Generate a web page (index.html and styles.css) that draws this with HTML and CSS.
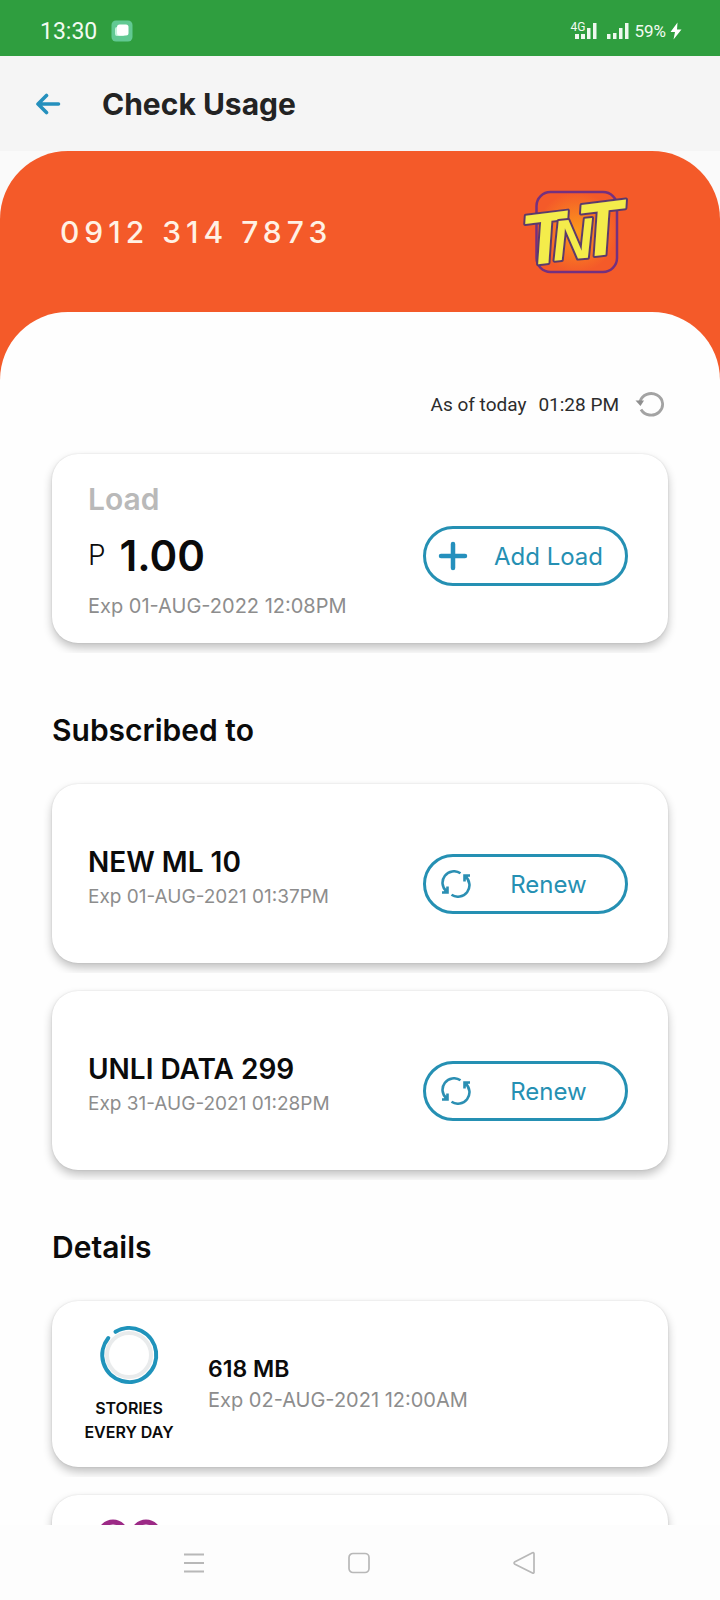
FILE: index.html
```
<!DOCTYPE html>
<html lang="en">
<head>
<meta charset="utf-8">
<meta name="viewport" content="width=device-width, initial-scale=1">
<title>Check Usage</title>
<link rel="stylesheet" href="styles.css">
</head>
<body>
<div class="status">
  <span class="clock">13:30</span>
  <svg class="app-badge" width="22" height="22" viewBox="0 0 22 22" aria-hidden="true">
    <rect x="0.5" y="0.5" width="21" height="21" rx="4.500" fill="#62c993"/>
    <rect x="4" y="7" width="10" height="9" rx="2" fill="#c4f3dc"/>
    <rect x="6" y="4.500" width="11.500" height="11" rx="2.500" fill="#fff"/>
  </svg>
  <span class="status-right">
    <span class="cell">
      <svg width="28" height="18" viewBox="0 0 28 18" fill="#eef8ee" aria-hidden="true">
        <rect x="5" y="12" width="4" height="5"/><rect x="11" y="12" width="4" height="5"/><rect x="17" y="6" width="3.500" height="11"/><rect x="23" y="1" width="3.500" height="16"/>
      </svg>
      <span class="net">4G</span>
    </span>
    <svg width="24" height="18" viewBox="0 0 24 18" fill="#eef8ee" aria-hidden="true">
      <rect x="1" y="12" width="3.500" height="5"/><rect x="7" y="11" width="3.500" height="6"/><rect x="13" y="6" width="3.500" height="11"/><rect x="19" y="1" width="3.500" height="16"/>
    </svg>
    <span class="battery">59%</span>
    <svg class="bolt" width="12" height="18" viewBox="0 0 12 18" aria-hidden="true"><path d="M7.500 0.500 0.500 10h4.500L3.500 17.500 11.500 7.500H7z" fill="#fff"/></svg>
  </span>
</div>

<header class="topbar">
  <button class="back" type="button" aria-label="Back">
    <svg width="26" height="24" viewBox="0 0 26 24" fill="none" stroke="#2590bd" stroke-width="3.600" stroke-linecap="round" stroke-linejoin="round"><path d="M22.500 12H3M10.500 3.500 2 12l8.500 8.500"/></svg>
  </button>
  <h1 class="title">Check Usage</h1>
</header>

<main class="main">
  <div class="hero">
    <div class="account">
      <span class="number">0912 314 7873</span>
      <svg class="logo" width="140" height="105" viewBox="0 0 140 105" role="img" aria-label="TNT">
        <defs><radialGradient id="glow"><stop offset="0" stop-color="#fb9a1c"/><stop offset="1" stop-color="#f45a29"/></radialGradient></defs>
        <rect x="26.500" y="13" width="80.500" height="80" rx="14" fill="url(#glow)" stroke="#74307f" stroke-width="2.500"/>
        <g class="logo-text">
          <text x="0" y="0" font-size="72" transform="translate(37 84) rotate(-7)" text-anchor="middle">T</text>
          <text x="0" y="0" font-size="57" transform="translate(64 80) rotate(-5)" text-anchor="middle">N</text>
          <text x="0" y="0" font-size="76" transform="translate(94 76) rotate(-7)" text-anchor="middle">T</text>
        </g>
      </svg>
    </div>

    <div class="panel">
      <div class="asof">
        <span>As of today</span>
        <span>01:28 PM</span>
        <button class="refresh" type="button" aria-label="Refresh">
          <svg width="30" height="26" viewBox="0 0 30 26" fill="none"><path d="M5 10.500A11.500 10.800 0 1 1 6 18.500" stroke="#a3a3a3" stroke-width="2.800"/><path d="M0.500 9.500 9 9.500 5.500 15z" fill="#8e8e8e"/></svg>
        </button>
      </div>

      <div class="slot slot-load">
        <section class="card card-load">
          <div>
            <h2 class="load-label">Load</h2>
            <p class="balance"><span class="peso">P</span><strong class="amount">1.00</strong></p>
            <p class="exp">Exp 01-AUG-2022 12:08PM</p>
          </div>
          <button class="pill pill-add" type="button">
            <svg width="30" height="30" viewBox="0 0 30 30" stroke="#2590bd" stroke-width="4.500" stroke-linecap="round" aria-hidden="true"><path d="M15 3v24M3 15h24"/></svg>
            <span class="pill-text">Add Load</span>
          </button>
        </section>
      </div>

      <h2 class="heading">Subscribed to</h2>
      <ul class="list">
        <li class="slot">
          <article class="card card-sub">
            <div>
              <h3 class="name">NEW ML 10</h3>
              <p class="exp exp-sub">Exp 01-AUG-2021 01:37PM</p>
            </div>
            <button class="pill" type="button">
              <svg width="30" height="28" viewBox="0 0 30 28" fill="none" stroke="#2b8fb3" stroke-width="2.600" aria-hidden="true"><path d="M5.500 21.500A11.500 11.500 0 0 1 19.500 3.300M24.500 6.500A11.500 11.500 0 0 1 10.500 24.700"/><path d="M29 5.500h-5.500v6M1 22.500h5.500v-6"/><path d="M23 5.500h5l-4.500 5zM7 22.500H2l4.500-5z" fill="#2b8fb3" stroke="none"/></svg>
              <span class="pill-text">Renew</span>
            </button>
          </article>
        </li>
        <li class="slot">
          <article class="card card-sub">
            <div>
              <h3 class="name">UNLI DATA 299</h3>
              <p class="exp exp-sub">Exp 31-AUG-2021 01:28PM</p>
            </div>
            <button class="pill" type="button">
              <svg width="30" height="28" viewBox="0 0 30 28" fill="none" stroke="#2b8fb3" stroke-width="2.600" aria-hidden="true"><path d="M5.500 21.500A11.500 11.500 0 0 1 19.500 3.300M24.500 6.500A11.500 11.500 0 0 1 10.500 24.700"/><path d="M29 5.500h-5.500v6M1 22.500h5.500v-6"/><path d="M23 5.500h5l-4.500 5zM7 22.500H2l4.500-5z" fill="#2b8fb3" stroke="none"/></svg>
              <span class="pill-text">Renew</span>
            </button>
          </article>
        </li>
      </ul>

      <h2 class="heading heading-details">Details</h2>
      <ul class="list">
        <li class="slot">
          <article class="card card-detail">
            <div class="meter">
              <svg width="60" height="60" viewBox="0 0 60 60" fill="none" aria-hidden="true"><circle cx="30" cy="30" r="22" stroke="#e9ebec" stroke-width="4"/><path d="M16.500 6.800A27 27 0 1 1 9.300 13" stroke="#1f93bb" stroke-width="4" stroke-linecap="round"/></svg>
              <span class="meter-label">STORIES EVERY DAY</span>
            </div>
            <div>
              <h3 class="data">618 MB</h3>
              <p class="exp">Exp 02-AUG-2021 12:00AM</p>
            </div>
          </article>
        </li>
        <li class="slot">
          <article class="card card-detail card-next">
            <div class="meter">
              <svg width="66" height="60" viewBox="0 0 66 60" fill="none" stroke="#9c2a86" stroke-width="5" aria-hidden="true"><circle cx="17" cy="17" r="13"/><circle cx="50" cy="17" r="13"/></svg>
            </div>
          </article>
        </li>
      </ul>
    </div>
  </div>
</main>

<nav class="nav" aria-label="System">
  <button type="button" aria-label="Recent apps"><svg width="24" height="24" viewBox="0 0 24 24" stroke="#b8b8b8" stroke-width="1.800"><path d="M2 3.500h20M2 12h20M2 20.500h20"/></svg></button>
  <button type="button" aria-label="Home"><svg width="24" height="24" viewBox="0 0 24 24" fill="none" stroke="#b8b8b8" stroke-width="1.700"><rect x="2" y="2.500" width="20" height="19" rx="4"/></svg></button>
  <button type="button" aria-label="Back"><svg width="24" height="24" viewBox="0 0 24 24" fill="none" stroke="#b8b8b8" stroke-width="1.700" stroke-linejoin="round"><path d="M22 2.500v19q-.4 1.200-1.500.5L2.500 13q-1-1 0-2l18-9.300q1-.4 1.500.8z"/></svg></button>
</nav>
</body>
</html>
```
FILE: styles.css
```
* { box-sizing: border-box; }

body {
  margin: 0;
  height: 100vh;
  display: flex;
  flex-direction: column;
  background: #fdfdfd;
  color: #0b0b0b;
  font-family: Inter, "Open Sans", sans-serif;
}

h1, h2, h3, p, ul { margin: 0; padding: 0; }
h1, h2, h3 { font-weight: 600; }
ul { list-style: none; }
svg { display: block; flex: none; }
button { font: inherit; padding: 0; border: 0; background: none; }

.status {
  flex: none;
  display: flex;
  align-items: center;
  gap: 14px;
  height: 56px;
  padding: 6px 38px 0 40px;
  background: #2f9e3f;
  color: #f2fbf2;
  font-family: Roboto, sans-serif;
}
.clock { font-size: 23px; }
.status-right { display: flex; align-items: center; gap: 4px; margin-left: auto; }
.cell { position: relative; margin-right: 4px; }
.net { position: absolute; left: 0; top: -2px; font-size: 12px; line-height: 14px; }
.battery { font-size: 17px; }

.topbar {
  flex: none;
  display: flex;
  align-items: center;
  gap: 40px;
  height: 95px;
  padding: 0 36px;
  background: #f5f5f5;
}
.title { font-size: 30px; line-height: 40px; font-weight: 700; color: #232323; }

.main { flex: 1; min-height: 0; overflow: hidden; background: #fafafa; }
.hero { background: #f45a29; border-radius: 68px 68px 0 0; }
.account {
  display: flex;
  align-items: center;
  justify-content: space-between;
  height: 161px;
  padding: 0 70px 0 60px;
}
.number { color: #fff1e4; font-size: 30px; font-weight: 500; letter-spacing: 5px; }
.logo-text text {
  font-family: "Liberation Sans", sans-serif;
  font-weight: 700;
  font-style: italic;
  fill: #f4ec4b;
  stroke: #5b3a6b;
  stroke-width: 4px;
  stroke-linejoin: round;
  paint-order: stroke;
}

.panel { padding: 74px 40px 0; background: #fefefe; border-radius: 68px 68px 0 0; }
.asof {
  display: flex;
  align-items: center;
  justify-content: flex-end;
  gap: 12px;
  height: 36px;
  margin-bottom: 22px;
  padding-right: 15px;
  color: #2c2c2c;
  font-family: Roboto, sans-serif;
  font-size: 19px;
}
.refresh { margin-left: 4px; }

.slot { padding: 10px 12px; overflow: hidden; }
.list { display: grid; gap: 8px; }
.card {
  display: flex;
  background: #fff;
  border-radius: 26px;
  box-shadow: 0 0 2px rgba(0, 0, 0, 0.12), 0 5px 10px rgba(0, 0, 0, 0.24);
}
.card-load { align-items: center; justify-content: space-between; padding: 25px 40px 22px 36px; }
.load-label { color: #b9b9b9; font-size: 30px; line-height: 40px; }
.balance { display: flex; align-items: center; gap: 14px; height: 72px; }
.peso { font-size: 28px; font-weight: 300; }
.amount { font-size: 42px; font-weight: 600; }
.exp { color: #8d8d8d; font-size: 20px; line-height: 30px; }

.pill {
  flex: none;
  display: flex;
  align-items: center;
  width: 205px;
  height: 60px;
  padding: 0 15px;
  border: 3px solid #2590b3;
  border-radius: 30px;
  color: #2590b3;
}
.pill-add { margin-top: 12px; padding: 0 12px; }
.pill-text { flex: 1; padding-left: 16px; text-align: center; font-size: 24px; }

.heading { margin: 56px 12px 23px; font-size: 30px; line-height: 42px; }
.heading-details { margin-top: 46px; }

.card-sub { align-items: flex-end; justify-content: space-between; padding: 59px 40px 49px 36px; }
.name { font-size: 28px; line-height: 38px; }
.exp-sub { font-size: 19px; line-height: 32px; padding-bottom: 1px; }

.card-detail { align-items: center; gap: 33px; min-height: 166px; padding: 23px 31px; }
.card-next { align-items: flex-start; }
.meter { display: flex; flex-direction: column; align-items: center; gap: 11px; width: 92px; }
.meter-label { font-size: 16px; line-height: 24px; font-weight: 600; text-align: center; }
.data { font-size: 23px; line-height: 32px; }

.nav {
  flex: none;
  display: flex;
  align-items: center;
  justify-content: space-between;
  height: 75px;
  padding: 0 184px 0 182px;
  background: #fdfdfd;
}
```
